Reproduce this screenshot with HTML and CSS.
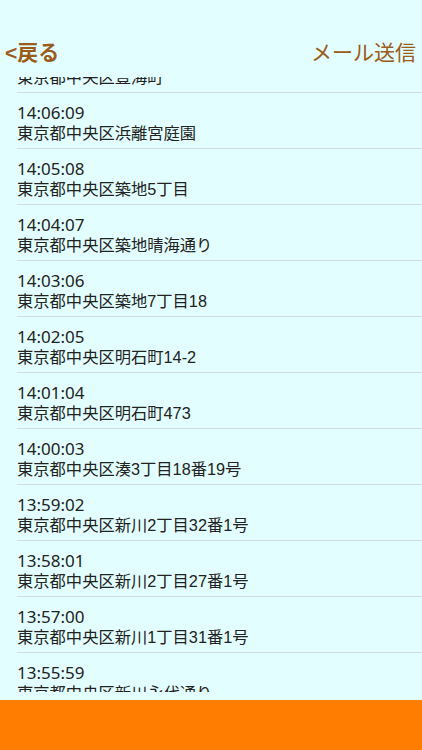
FILE: index.html
```html
<!DOCTYPE html>
<html lang="ja">
<head>
    <meta charset="UTF-8">
    <title>履歴</title>
    <link rel="stylesheet" href="styles.css">
</head>
<body>
    <div class="page">
        <div class="nav">
            <span class="nav-back">&lt;戻る</span>
            <span class="nav-mail">メール送信</span>
        </div>
        <div class="list">
            <div class="list-inner">
                <div class="row"><div class="time">14:07:10</div><div class="addr">東京都中央区豊海町</div></div>
                <div class="row"><div class="time">14:06:09</div><div class="addr">東京都中央区浜離宮庭園</div></div>
                <div class="row"><div class="time">14:05:08</div><div class="addr">東京都中央区築地5丁目</div></div>
                <div class="row"><div class="time">14:04:07</div><div class="addr">東京都中央区築地晴海通り</div></div>
                <div class="row"><div class="time">14:03:06</div><div class="addr">東京都中央区築地7丁目18</div></div>
                <div class="row"><div class="time">14:02:05</div><div class="addr">東京都中央区明石町14-2</div></div>
                <div class="row"><div class="time">14:01:04</div><div class="addr">東京都中央区明石町473</div></div>
                <div class="row"><div class="time">14:00:03</div><div class="addr">東京都中央区湊3丁目18番19号</div></div>
                <div class="row"><div class="time">13:59:02</div><div class="addr">東京都中央区新川2丁目32番1号</div></div>
                <div class="row"><div class="time">13:58:01</div><div class="addr">東京都中央区新川2丁目27番1号</div></div>
                <div class="row"><div class="time">13:57:00</div><div class="addr">東京都中央区新川1丁目31番1号</div></div>
                <div class="row"><div class="time">13:55:59</div><div class="addr">東京都中央区新川永代通り</div></div>
            </div>
        </div>
        <div class="toolbar"></div>
    </div>
</body>
</html>
```

FILE: styles.css
```css
html, body {margin: 0; padding: 0; width: 100%; height: 100%;}
body {background: #e3fefe; font-family: "Liberation Sans", "Noto Sans CJK JP", sans-serif; color: #222;}
.page {display: flex; flex-direction: column; height: 750px;}
.nav {height: 77px; flex: none; display: flex; justify-content: space-between; align-items: flex-start; padding: 0 6px 0 5px; box-sizing: border-box; color: #9a5c1c;}
.nav span {font-size: 21px; line-height: 24px; margin-top: 41px;}
.nav-back {font-weight: bold;}
.list {flex: 1; overflow: hidden; margin-bottom: 8px;}
.list-inner {margin-top: -40px;}
.row {height: 45px; margin-left: 17px; border-bottom: 1px solid #cfe0e2; padding-top: 10px;}
.time, .addr {font-size: 16px; line-height: 20px; white-space: nowrap;}
.addr {font-size: 16.3px;}
.time {font-family: "Noto Sans", "Liberation Sans", sans-serif; font-size: 17px;}
.toolbar {height: 50px; flex: none; background: #ff7d00;}
```
